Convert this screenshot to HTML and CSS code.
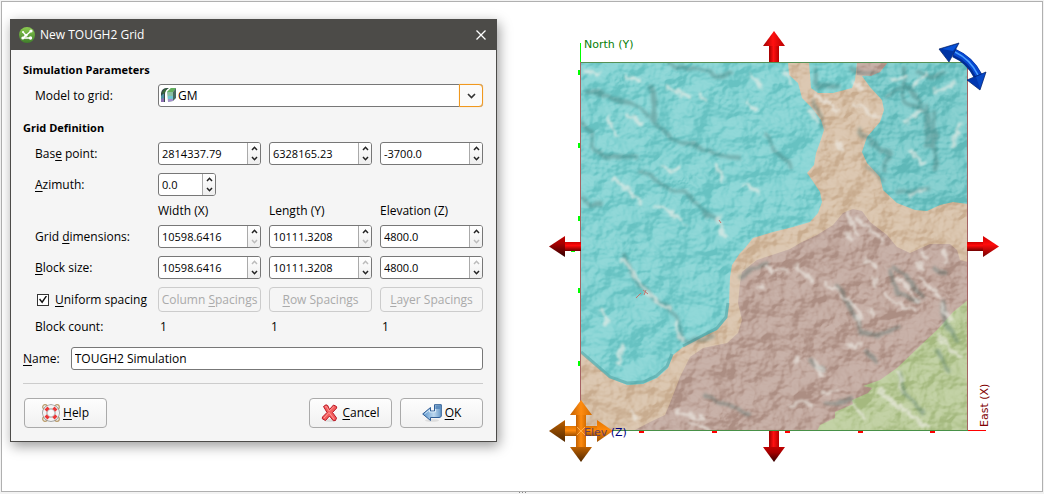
FILE: index.html
```html
<!DOCTYPE html>
<html lang="en">
<head>
<meta charset="utf-8">
<title>New TOUGH2 Grid</title>
<link rel="stylesheet" href="styles.css">
</head>
<body>
<svg class="defs" width="0" height="0" aria-hidden="true">
  <symbol id="up" viewBox="0 0 7 5"><path d="M1 4 3.500 1.300 6 4" fill="none" stroke="currentColor" stroke-width="1.500"/></symbol>
  <symbol id="down" viewBox="0 0 7 5"><path d="M1 1 3.500 3.700 6 1" fill="none" stroke="currentColor" stroke-width="1.500"/></symbol>
</svg>
<main class="viewport">
  <section class="dialog" role="dialog" aria-labelledby="dialog-title">
    <header class="titlebar">
      <svg class="app-icon" viewBox="0 0 16 16" aria-hidden="true">
        <defs><linearGradient id="leaf" x2="0" y2="1"><stop stop-color="#8ccc50"/><stop offset="1" stop-color="#3e7d2a"/></linearGradient></defs>
        <circle cx="8" cy="8" r="8" fill="url(#leaf)"/>
        <path d="M4 5 7 8.500 12 4M3.500 11 7 8.500M3.500 11H11.500" fill="none" stroke="#fff" stroke-width="1.300"/>
        <g fill="#fff"><circle cx="4" cy="5" r="1"/><circle cx="12" cy="4" r="1.600"/><circle cx="3.800" cy="11" r="1.500"/><circle cx="11.500" cy="11" r="1.700"/><circle cx="7" cy="8.300" r="1.500"/></g>
      </svg>
      <h1 class="title" id="dialog-title">New TOUGH2 Grid</h1>
      <button class="close" type="button" aria-label="Close"><svg viewBox="0 0 10 10"><path d="M0.500.500 9.500 9.500M9.500.500.500 9.500" stroke="#fff" stroke-width="1.300"/></svg></button>
    </header>
    <form class="form">
      <h2 class="heading">Simulation Parameters</h2>
      <div class="fields">
        <label class="label" for="model">Model to <u>g</u>rid:</label>
        <div class="combo">
          <svg class="model-icon" viewBox="0 0 16 16" aria-hidden="true">
            <path d="M1 15V6Q2 1 7 1H9Q5 3 5 7V15Z" fill="#344c48"/><path d="M1 15V9L4 6V14Z" fill="#4f8fa0"/><path d="M2 6Q4 2 8 1Q5 4 4 7Z" fill="#386b38"/>
            <path d="M1 12 4 11V15H1Z" fill="#8a6eb0"/><path d="M7 5 11 1 16 1 13 5V14L8 15Z" fill="#8ac0a4"/>
            <path d="M7 5 11 1H16L13 5Z" fill="#62b05c"/><path d="M13 5 16 1V11L13 14Z" fill="#466a60"/><path d="M8 9H13V12H8Z" fill="#70c6d2"/><path d="M8 12H13V14L8 15Z" fill="#a48fcb"/>
          </svg>
          <select class="select" id="model"><option>GM</option></select>
          <span class="drop" aria-hidden="true"><svg viewBox="0 0 9 6"><path d="M1 1 4.500 4.500 8 1" fill="none" stroke="#333" stroke-width="1.600"/></svg></span>
        </div>
      </div>
      <h2 class="heading heading-next">Grid Definition</h2>
      <div class="fields">
        <label class="label" for="base-x">Bas<u>e</u> point:</label>
        <div class="spin"><input id="base-x" value="2814337.79"><span class="steps"><button type="button" aria-label="Increase"><svg><use href="#up"/></svg></button><button type="button" aria-label="Decrease"><svg><use href="#down"/></svg></button></span></div>
        <div class="spin"><input aria-label="Base point Y" value="6328165.23"><span class="steps"><button type="button" aria-label="Increase"><svg><use href="#up"/></svg></button><button type="button" aria-label="Decrease"><svg><use href="#down"/></svg></button></span></div>
        <div class="spin"><input aria-label="Base point Z" value="-3700.0"><span class="steps"><button type="button" aria-label="Increase"><svg><use href="#up"/></svg></button><button type="button" aria-label="Decrease"><svg><use href="#down"/></svg></button></span></div>

        <label class="label" for="azimuth"><u>A</u>zimuth:</label>
        <div class="spin spin-short"><input id="azimuth" value="0.0"><span class="steps"><button type="button" aria-label="Increase"><svg><use href="#up"/></svg></button><button type="button" aria-label="Decrease"><svg><use href="#down"/></svg></button></span></div>

        <span class="column column-first">Width (X)</span><span class="column">Length (Y)</span><span class="column">Elevation (Z)</span>

        <label class="label" for="dim-x">Grid <u>d</u>imensions:</label>
        <div class="spin"><input id="dim-x" value="10598.6416"><span class="steps"><button type="button" aria-label="Increase"><svg><use href="#up"/></svg></button><button type="button" aria-label="Decrease" disabled><svg><use href="#down"/></svg></button></span></div>
        <div class="spin"><input aria-label="Grid length" value="10111.3208"><span class="steps"><button type="button" aria-label="Increase"><svg><use href="#up"/></svg></button><button type="button" aria-label="Decrease" disabled><svg><use href="#down"/></svg></button></span></div>
        <div class="spin"><input aria-label="Grid elevation" value="4800.0"><span class="steps"><button type="button" aria-label="Increase"><svg><use href="#up"/></svg></button><button type="button" aria-label="Decrease" disabled><svg><use href="#down"/></svg></button></span></div>

        <label class="label" for="block-x"><u>B</u>lock size:</label>
        <div class="spin"><input id="block-x" value="10598.6416"><span class="steps"><button type="button" aria-label="Increase" disabled><svg><use href="#up"/></svg></button><button type="button" aria-label="Decrease"><svg><use href="#down"/></svg></button></span></div>
        <div class="spin"><input aria-label="Block length" value="10111.3208"><span class="steps"><button type="button" aria-label="Increase" disabled><svg><use href="#up"/></svg></button><button type="button" aria-label="Decrease"><svg><use href="#down"/></svg></button></span></div>
        <div class="spin"><input aria-label="Block elevation" value="4800.0"><span class="steps"><button type="button" aria-label="Increase" disabled><svg><use href="#up"/></svg></button><button type="button" aria-label="Decrease"><svg><use href="#down"/></svg></button></span></div>

        <label class="label check"><input class="checkbox" type="checkbox" checked><span><u>U</u>niform spacing</span></label>
        <button class="button" type="button" disabled>Column <u>S</u>pacings</button>
        <button class="button" type="button" disabled><u>R</u>ow Spacings</button>
        <button class="button" type="button" disabled><u>L</u>ayer Spacings</button>

        <span class="label count-label">Block count:</span>
        <output class="count">1</output><output class="count">1</output><output class="count">1</output>
      </div>
      <div class="name-row">
        <label for="name"><u>N</u>ame:</label>
        <input class="text" id="name" value="TOUGH2 Simulation">
      </div>
      <footer class="actions">
        <button class="button action help" type="button">
          <svg class="icon" viewBox="0 0 18 18" aria-hidden="true">
            <g fill="none" stroke="#b99a68" stroke-width="1.200"><circle cx="3" cy="3" r="2.300"/><circle cx="15" cy="3" r="2.300"/><circle cx="3" cy="15" r="2.300"/><circle cx="15" cy="15" r="2.300"/></g>
            <circle cx="9" cy="9" r="6.300" fill="none" stroke="#8b8b8b" stroke-width="5"/><circle cx="9" cy="9" r="6.300" fill="none" stroke="#f3f3f3" stroke-width="3.600"/>
            <path d="M2.500 5.500 5.500 2.500 8.200 5.500 5.500 8.200ZM12.500 2.500 15.500 5.500 12.500 8.200 9.800 5.500ZM2.500 12.500 5.500 9.800 8.200 12.500 5.500 15.500ZM9.800 12.500 12.500 9.800 15.500 12.500 12.500 15.500Z" fill="#ed3434"/><circle cx="9" cy="9" r="3.800" fill="#fafafa" stroke="#aaa" stroke-width=".6"/>
          </svg><span><u>H</u>elp</span></button>
        <button class="button action" type="button">
          <svg class="icon" viewBox="0 0 18 18" aria-hidden="true"><ellipse cx="9" cy="16.500" rx="6" ry="1.500" fill="#ddd"/>
            <path d="M2.500 2.500 5 .800 6.700 1.500 8.500 5.500 12.500 1 15.500 2.500 15.700 4 11.500 8.500 15.500 14 14.500 16.500 12.300 16.700 8.500 12 4.500 16.500 1.300 14.800 1.500 13 6 8.500Z" fill="#f45d5d" stroke="#b81825"/>
            <path d="M4 3 5.500 2.500 8.200 7 13 2.500M3 14 8 8.500 13 15" fill="none" stroke="#ff9a98"/></svg><span><u>C</u>ancel</span></button>
        <button class="button action" type="button">
          <svg class="icon icon-wide" viewBox="0 0 20 18" aria-hidden="true"><defs><linearGradient id="enter" x2="1"><stop stop-color="#5994cd"/><stop offset=".6" stop-color="#bdd8ee"/><stop offset="1" stop-color="#6698c8"/></linearGradient></defs><ellipse cx="10" cy="16.500" rx="7" ry="1.300" fill="#ddd"/>
            <path d="M.700 10 8.500 3.500V7H12.500V.700H19.300V12Q19 13.500 17 13.500H8.500V16.500Z" fill="url(#enter)" stroke="#315f96"/><path d="M13.500 1.500H18.500V5H13.500Z" fill="#5d8dbf"/><path d="M2.500 10 7.500 6V8H13.500V5" fill="none" stroke="#e2f0fa" stroke-width=".8"/></svg><span><u>O</u>K</span></button>
      </footer>
    </form>
  </section>

  <svg class="scene" viewBox="540 19 480 450" role="img" aria-label="Model scene with grid handles">
    <defs>
      <clipPath id="extent"><path d="M581 62H968V431H581Z"/></clipPath>
      <filter id="relief" x="0" y="0" width="1" height="1" color-interpolation-filters="sRGB">
        <feTurbulence type="fractalNoise" baseFrequency=".03 .035" numOctaves="4" seed="12"/>
        <feColorMatrix values="0 0 0 0 0  0 0 0 0 0  0 0 0 0 0  1 0 0 0 0"/>
        <feDiffuseLighting surfaceScale="16" diffuseConstant=".9" lighting-color="#fff"><feDistantLight azimuth="225" elevation="45"/></feDiffuseLighting>
      </filter>
      <filter id="rough-shade" x="-.05" y="-.05" width="1.100" height="1.100">
        <feTurbulence type="fractalNoise" baseFrequency=".07" numOctaves="2" seed="4" result="n"/>
        <feDisplacementMap in="SourceGraphic" in2="n" scale="9" xChannelSelector="R" yChannelSelector="G"/><feGaussianBlur stdDeviation="1.500"/>
      </filter>
      <filter id="rough-light" x="-.05" y="-.05" width="1.100" height="1.100">
        <feTurbulence type="fractalNoise" baseFrequency=".12" numOctaves="2" seed="9" result="n"/>
        <feDisplacementMap in="SourceGraphic" in2="n" scale="11" xChannelSelector="R" yChannelSelector="G"/><feGaussianBlur stdDeviation="1.100"/>
      </filter>
      <linearGradient id="red-v"><stop stop-color="#a00000"/><stop offset=".45" stop-color="#ff1010"/><stop offset="1" stop-color="#b80000"/></linearGradient>
      <linearGradient id="red-h" x2="0" y2="1"><stop stop-color="#d00000"/><stop offset=".4" stop-color="#ff0c0c"/><stop offset="1" stop-color="#700000"/></linearGradient>
      <linearGradient id="red-dark" x2="0" y2="1"><stop stop-color="#c00000"/><stop offset=".35" stop-color="#a80000"/><stop offset="1" stop-color="#300000"/></linearGradient>
      <linearGradient id="or-v"><stop stop-color="#c26000"/><stop offset=".5" stop-color="#ff8c10"/><stop offset="1" stop-color="#d46c00"/></linearGradient>
      <linearGradient id="or-h" x2="0" y2="1"><stop stop-color="#e07400"/><stop offset=".45" stop-color="#ff8a0c"/><stop offset="1" stop-color="#9c4e00"/></linearGradient>
      <linearGradient id="or-dark" x2="0" y2="1"><stop stop-color="#bd6000"/><stop offset="1" stop-color="#542a00"/></linearGradient>
    </defs>

    <g clip-path="url(#extent)">
      <path class="tan" d="M581 62H968V431H581Z"/>
      <path class="teal" d="M581 62H788L789 75 798 83 802 98 812 108 821 120 824 130 819 145 816 153 814 165 807 173 812 180 820 192 822 202 818 213 810 222 793 227 773 232 753 238 745 248 740 253 732 265 730 277 729 303 727 318 717 330 700 338 683 347 673 355 668 368 657 378 643 384 627 385 610 378 595 365 581 353Z"/>
      <path class="teal" d="M809 62H857L855 80 852 88 833 93H818L811 88Z"/>
      <path class="teal teal-deep" d="M888 62 880 72 862 76 870 87 882 100 884 110 880 122 867 137 862 152 867 163 880 177 883 190 897 203 915 210 927 211 940 205 953 202 968 204V62Z"/>
      <path class="mauve" d="M857 62H888L880 72 871 76 857 75Z"/>
      <path class="mauve" d="M633 431 650 422 665 415 670 403 680 377 690 357 703 348 727 343 738 333 742 320 738 303 740 283 742 272 757 260 790 249 800 243 817 235 833 225 843 213 853 209 862 211 870 222 887 235 897 247 910 253 930 244 950 244 957 250 960 260 968 262V431Z"/>
      <path class="green" d="M968 300 953 312 937 330 923 343 897 368 880 380 863 386 872 388 868 393 852 400 853 404 835 412V418L820 425 817 431H968Z"/>
      <rect class="relief" x="581" y="62" width="387" height="369" filter="url(#relief)"/>
      <path class="rim" d="M581 352 595 364 610 377 627 383 643 382 656 376 667 366 672 354M683 346 700 337 717 328 726 317 728 303"/>
      <g class="shade" filter="url(#rough-shade)">
        <path d="M666 62 678 68 700 68 709 70 713 75 724 76 730 72M653 84 653 118 662 132 676 141 700 147 720 156 741 158M581 122 590 132 595 153 615 156 638 158M638 170 655 178 668 189 684 193 696 205 708 214 719 220M765 135 777 152 792 168M642 286 653 299 670 309 678 322 682 338 690 343 714 335"/>
        <path d="M585 89 610 98 636 104 650 116M581 198 593 205 602 202M622 254 636 278 647 292M655 90V115M584 92H605"/>
        <path d="M905 64V102L925 112 926 145 940 151M900 88 885 97M935 112V170M868 143 888 155 884 173M945 72 931 80 916 72M895 191 912 194 928 188M908 85 922 108M927 105 933 150"/>
        <path d="M816 68V88L841 84M858 130 879 145M867 164 884 182M812 99 824 128M848 70 880 74M740 277 752 268 770 262M835 285 850 305 862 333 879 335 900 326M890 270 898 294 920 302M894 267 925 298M935 267 946 276M865 350 877 362M808 360 824 370M826 405 853 399M704 395 750 415M943 300 945 325 958 342M900 371 904 392 924 413M937 349 950 373"/>
      </g>
      <g class="light" filter="url(#rough-light)">
        <path d="M625 75 641 80M665 87 692 97M700 92 706 103M744 100 759 112M750 75 763 87M608 116 615 136M626 113 643 125M661 168 678 170M613 178 642 204M655 204 685 223M716 163 723 182M745 184 760 192M622 258 640 285 658 302 670 310M675 321 684 344M585 71 600 74M783 70 792 87M625 343 617 365M718 213 723 235M600 310 608 324"/>
        <path d="M854 80 861 91M855 102 870 112 878 119M813 93 838 112M809 109 821 123M838 140 842 152M847 214 858 238M892 81 907 76M914 85 930 73M934 92 957 82M905 124 923 110M910 150 924 163M926 188 908 197M952 148 961 121"/>
        <path d="M757 287 765 289M765 266 775 271 787 270M794 266 814 280M839 293 851 302 859 314 860 326M884 293 891 301 914 310M897 276 907 286 919 304M919 278 929 286 941 297M943 250 947 265M915 263 925 270M812 360 824 374M847 343 854 350 860 342M798 356 795 362M675 410 704 419M688 422 700 427 713 430M790 408 802 401 813 406M819 393 839 390M899 373 901 390M879 388 893 402 912 416 928 427M852 405 864 419M938 335 948 349 961 357M942 304 952 324M631 411 637 421"/>
        <path d="M873 276 877 287M864 259 878 268M825 282 838 290M870 310 875 316M920 250 928 260M856 217 884 242M848 232 853 241"/>
      </g>
      <path class="marker" d="M636 298 641 293M643 290 648 294M646 290 644 295M719 220 721 223"/>
    </g>

    <path d="M580.500 62.500H968" stroke="#569154"/><path d="M580.500 62V431M967.500 62V431" stroke="#a66363"/><path d="M580 430.500H968" stroke="#479147"/>
    <path d="M580.500 43V62" stroke="#0f0"/><path d="M968 430.500H986" stroke="#f00"/>
    <path d="M578 70h2v5h-2ZM578 143h2v5h-2ZM578 216h2v5h-2ZM578 288h2v5h-2ZM578 361h2v5h-2ZM571 251h4v1h-4Z" fill="#0f0"/>
    <path d="M639 431h5v2h-5ZM712 431h5v2h-5ZM785 431h5v2h-5ZM858 431h5v2h-5ZM930 431h5v2h-5Z" fill="#f00"/>
    <text class="axis north" x="584" y="48">North (Y)</text>
    <text class="axis east" transform="translate(988 427) rotate(-90)">East (X)</text>

    <path d="M769 62V45H779V62Z" fill="url(#red-v)"/><path d="M774 31 785 46H763Z" fill="url(#red-v)"/>
    <path d="M769 431H779V448H769Z" fill="url(#red-v)"/><path d="M763 447H785L774 462Z" fill="url(#red-dark)"/>
    <path d="M564 242H581V251H564Z" fill="url(#red-h)"/><path d="M549 246.500 565 236V257Z" fill="url(#red-dark)"/>
    <path d="M967 242H984V251H967Z" fill="url(#red-h)"/><path d="M999 246.500 983 236V257Z" fill="url(#red-h)"/>

    <path d="M954 53Q970 60 978 76" fill="none" stroke="#002d94" stroke-width="9"/><path d="M954 52Q971 59 979 76" fill="none" stroke="#0747d0" stroke-width="6"/><path d="M955 52Q970 59 978 75" fill="none" stroke="#4ba1ff" stroke-width="1.500"/>
    <path d="M939 49 959 43 949 62Z" fill="#0034a4" stroke="#001f69" stroke-width=".7"/><path d="M942 49 958 44 953 51Z" fill="#0751d8"/>
    <path d="M980 90 967 80 986 72Z" fill="#0036b0" stroke="#001f69" stroke-width=".7"/><path d="M980 88 976 77 985 73Z" fill="#0648c6"/>

    <path d="M564 426H598V436H564Z" fill="url(#or-h)"/><path d="M576 414H586V448H576Z" fill="url(#or-v)"/>
    <path d="M581 400 592 415H570Z" fill="url(#or-v)"/><path d="M570 447H592L581 462Z" fill="url(#or-dark)"/><path d="M549 431 565 420V442Z" fill="url(#or-dark)"/><path d="M613 431 597 420V442Z" fill="url(#or-h)"/><path d="M577 427 585 435M585 427 577 435" stroke="#ffae4b"/>
    <text class="axis elev" x="584" y="436">Elev<tspan class="elev-unit"> (Z)</tspan></text>
  </svg>
</main>
<div class="grip" aria-hidden="true"><i></i><i></i><i></i></div>
</body>
</html>
```
FILE: styles.css
```css
* { box-sizing: border-box; }

body {
  margin: 0;
  min-height: 100vh;
  padding: 1px 1px 0;
  display: flex;
  flex-direction: column;
  background: #f3f3f3;
  color: #000;
  font: 12px/16px "Open Sans", "Noto Sans", sans-serif;
}

button, input, select { font: inherit; color: inherit; margin: 0; }
h1, h2 { margin: 0; font-size: 12px; line-height: 16px; }
u { text-decoration: underline; text-underline-offset: 2px; }
.defs { position: absolute; }

.viewport {
  flex: 1;
  display: grid;
  grid-template-columns: minmax(420px, 487fr) 480fr;
  column-gap: 43px;
  align-items: start;
  padding: 17px 22px 17px 8px;
  border: 1px solid #b0b0b0;
  background: #fff;
}

.dialog {
  border: 1px solid #4c4b49;
  background: #f5f5f5;
  box-shadow: 2px 4px 12px rgba(0, 0, 0, .4);
}
.titlebar {
  display: flex;
  align-items: center;
  gap: 5px;
  height: 30px;
  padding: 0 10px 0 8px;
  background: #4c4b48;
  color: #fff;
}
.app-icon { width: 16px; height: 16px; }
.title { flex: 1; font-weight: 400; }
.close { display: flex; padding: 0; border: 0; background: none; }
.close svg { width: 10px; height: 10px; }

.form { padding: 12px 13px 13px 12px; }
.heading { font-size: 11px; font-weight: 700; margin-bottom: 6px; }
.heading-next { margin-top: 13px; }
.fields {
  display: grid;
  grid-template-columns: 127px repeat(3, 1fr);
  gap: 8px;
  align-items: center;
}
.label { padding-left: 12px; white-space: nowrap; }

.combo { grid-column: 2 / -1; position: relative; display: flex; height: 23px; }
.select {
  flex: 1;
  appearance: none;
  padding: 0 24px 0 19px;
  border: 1px solid #777;
  border-radius: 3px;
  background: #fff;
}
.model-icon { position: absolute; left: 2px; top: 3px; width: 16px; height: 16px; }
.drop {
  position: absolute;
  inset: 0 0 0 auto;
  width: 24px;
  display: flex;
  align-items: center;
  justify-content: center;
  border: 1px solid #f0981e;
  border-radius: 0 4px 4px 0;
  background: #fafafa;
  box-shadow: 0 0 1px #f5b45a;
  pointer-events: none;
}
.drop svg { width: 9px; height: 6px; }

.spin {
  display: flex;
  height: 23px;
  border: 1px solid #777;
  border-radius: 3px;
  background: #fff;
  overflow: hidden;
}
.spin input {
  flex: 1;
  min-width: 0;
  padding: 0 3px;
  border: 0;
  outline: 0;
  background: none;
  font-size: 11px;
}
.spin-short { width: 58px; grid-column: 2 / -1; }
.steps {
  display: flex;
  flex-direction: column;
  width: 13px;
  border-left: 1px solid #aaa;
  background: linear-gradient(#fff, #eee);
}
.steps button {
  flex: 1;
  display: flex;
  align-items: center;
  justify-content: center;
  padding: 0;
  border: 0;
  background: none;
  color: #222;
}
.steps button:disabled { color: #bbb; }
.steps svg { width: 7px; height: 5px; }

.column { line-height: 13px; }
.column-first { grid-column: 2; }

.check { display: flex; align-items: center; gap: 6px; padding-left: 14px; }
.checkbox {
  appearance: none;
  width: 12px;
  height: 12px;
  border: 1px solid #333;
  background: #fff;
  display: grid;
  place-items: center;
}
.checkbox:checked::before {
  content: "";
  width: 8px;
  height: 8px;
  background: #111;
  clip-path: polygon(0 50%, 14% 38%, 38% 68%, 86% 0, 100% 10%, 40% 100%);
}

.button {
  height: 25px;
  padding: 0;
  border: 1px solid #aaa;
  border-radius: 4px;
  background: linear-gradient(#fdfdfd, #f1f1f1);
  white-space: nowrap;
}
.button:disabled { border-color: #ccc; background: #f5f5f5; color: #aaa; }
.count-label, .count { line-height: 14px; }
.count { padding-left: 2px; }

.name-row { display: flex; align-items: center; gap: 11px; margin-top: 13px; }
.text {
  flex: 1;
  min-width: 0;
  height: 23px;
  padding: 0 3px;
  border: 1px solid #777;
  border-radius: 3px;
  background: #fff;
}
.actions {
  display: flex;
  gap: 8px;
  margin-top: 13px;
  padding: 14px 0 0 1px;
  border-top: 1px solid #ccc;
}
.action {
  display: flex;
  align-items: center;
  justify-content: center;
  gap: 3px;
  width: 83px;
  height: 30px;
}
.help { margin-right: auto; }
.icon { width: 18px; height: 18px; }
.icon-wide { width: 20px; }

.scene { display: block; width: 100%; height: auto; }
.tan { fill: #d6bfa6; }
.teal { fill: #80d1d1; }
.teal-deep { fill: #78c9c9; }
.mauve { fill: #bfa59b; }
.green { fill: #b9ca98; }
.relief { mix-blend-mode: soft-light; opacity: .4; }
.rim { fill: none; stroke: #57a5a5; stroke-width: 3; opacity: .6; }
.shade { fill: none; stroke: #3d6664; stroke-width: 4; opacity: .36; }
.light { fill: none; stroke: #f0eee8; stroke-width: 4; opacity: .6; }
.marker { fill: none; stroke: #c07870; }
.axis { font: 11px "DejaVu Sans", sans-serif; }
.north { fill: #078007; }
.east { fill: #800000; }
.elev { fill: #66405c; }
.elev-unit { fill: #000080; }

.grip { display: flex; justify-content: center; gap: 2px; height: 2px; }
.grip i { width: 1px; height: 1px; background: #888; }
```
